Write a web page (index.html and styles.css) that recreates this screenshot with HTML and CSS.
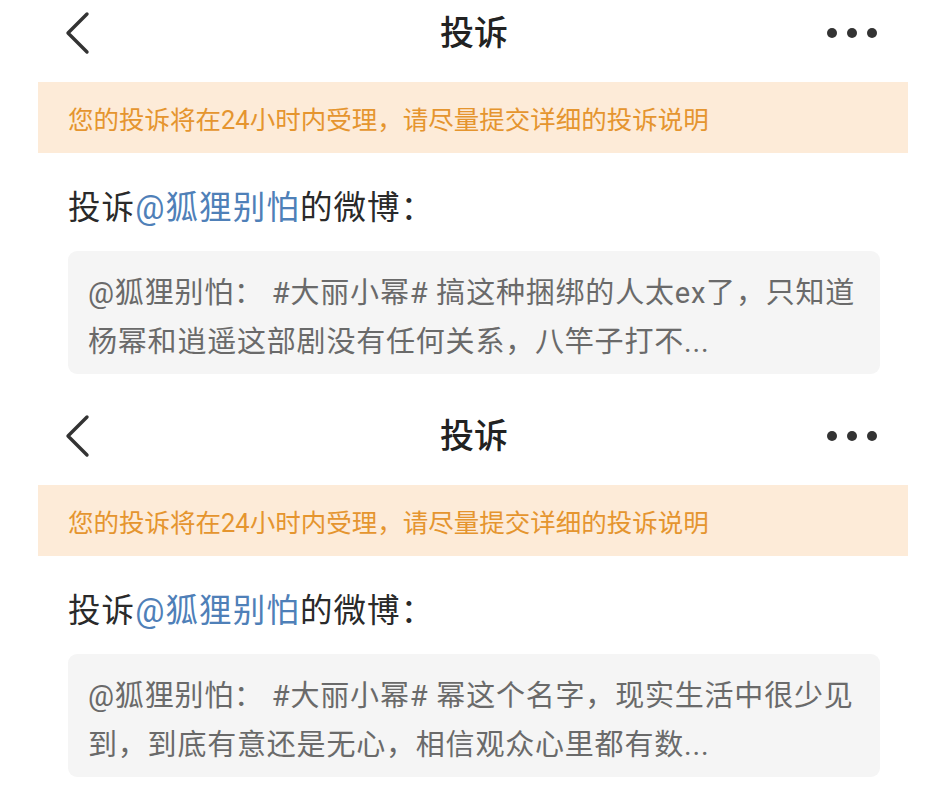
FILE: index.html
```html
<!DOCTYPE html>
<html lang="zh-CN">
<head>
<meta charset="utf-8">
<title>投诉</title>
<link rel="stylesheet" href="styles.css">
</head>
<body>
<section class="screen">
  <header class="nav">
    <div class="nav-left">
      <svg class="back" width="30" height="44" viewBox="0 0 30 44"><path d="M25 3 L6 22 L25 41" fill="none" stroke="#333" stroke-width="3.4" stroke-linecap="round" stroke-linejoin="round"/></svg>
    </div>
    <h1 class="title">投诉</h1>
    <div class="nav-right">
      <span class="dot"></span><span class="dot"></span><span class="dot"></span>
    </div>
  </header>
  <div class="banner">您的投诉将在24小时内受理，请尽量提交详细的投诉说明</div>
  <h2 class="heading">投诉<span class="link">@狐狸别怕</span>的微博：</h2>
  <div class="quote">@狐狸别怕： #大丽小幂# 搞这种捆绑的人太ex了，只知道<br>杨幂和逍遥这部剧没有任何关系，八竿子打不...</div>
</section>
<section class="screen">
  <header class="nav">
    <div class="nav-left">
      <svg class="back" width="30" height="44" viewBox="0 0 30 44"><path d="M25 3 L6 22 L25 41" fill="none" stroke="#333" stroke-width="3.4" stroke-linecap="round" stroke-linejoin="round"/></svg>
    </div>
    <h1 class="title">投诉</h1>
    <div class="nav-right">
      <span class="dot"></span><span class="dot"></span><span class="dot"></span>
    </div>
  </header>
  <div class="banner">您的投诉将在24小时内受理，请尽量提交详细的投诉说明</div>
  <h2 class="heading">投诉<span class="link">@狐狸别怕</span>的微博：</h2>
  <div class="quote">@狐狸别怕： #大丽小幂# 幂这个名字，现实生活中很少见<br>到，到底有意还是无心，相信观众心里都有数...</div>
</section>
</body>
</html>
```
FILE: styles.css
```css
html, body {
  margin: 0;
  padding: 0;
  background: #ffffff;
}
body {
  font-family: Roboto, "Noto Sans CJK SC", "Noto Sans", sans-serif;
  width: 948px;
}
.screen {
  height: 403px;
  display: flex;
  flex-direction: column;
  box-sizing: border-box;
}
.nav {
  height: 70px;
  display: grid;
  grid-template-columns: 1fr auto 1fr;
  align-items: center;
}
.nav-left {
  padding-left: 62px;
  display: flex;
  align-items: center;
  margin-top: -4px;
}
.title {
  margin: 0 0 4px 0;
  font-size: 34px;
  font-weight: 500;
  color: #222;
  line-height: 40px;
}
.nav-right {
  display: flex;
  justify-content: flex-end;
  align-items: center;
  gap: 10px;
  padding-right: 71px;
  margin-top: -4px;
}
.dot {
  width: 10px;
  height: 10px;
  border-radius: 50%;
  background: #333;
}
.banner {
  margin: 12px 40px 0 38px;
  height: 71px;
  background: #fdebd8;
  color: #e5952f;
  font-size: 25.5px;
  display: flex;
  align-items: center;
  padding-left: 30px;
}
.heading {
  margin: 35px 0 0 68px;
  font-size: 32.5px;
  font-weight: 400;
  line-height: 40px;
  letter-spacing: 1.1px;
  color: #2a2a2a;
}
.link {
  color: #4f80b8;
}
.quote {
  margin: 23px 68px 0 68px;
  height: 123px;
  box-sizing: border-box;
  padding: 18px 20px 0 20px;
  background: #f5f5f5;
  border-radius: 9px;
  color: #6a6a6a;
  font-size: 29px;
  line-height: 49px;
  letter-spacing: 0.8px;
  white-space: nowrap;
}
```
